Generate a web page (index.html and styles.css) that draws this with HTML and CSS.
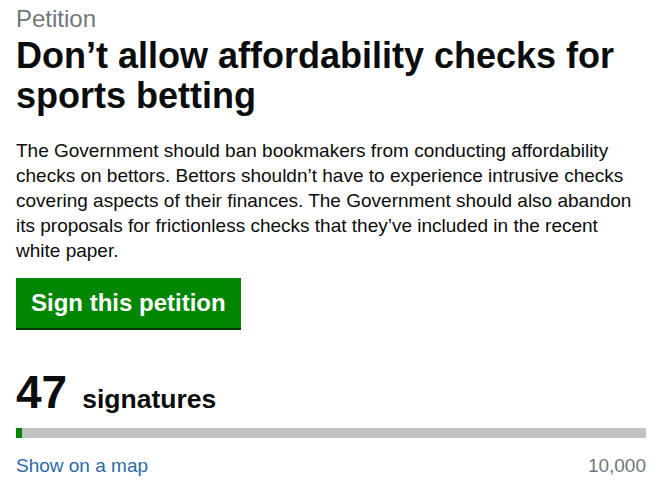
FILE: index.html
```html
<!DOCTYPE html>
<html lang="en">
<head>
<meta charset="utf-8">
<link rel="stylesheet" href="styles.css">
</head>
<body>
<main class="page">
  <div class="caption">Petition</div>
  <h1 class="title">Don’t allow affordability checks for sports betting</h1>
  <p class="lede">The Government should ban bookmakers from conducting affordability checks on bettors. Bettors shouldn’t have to experience intrusive checks covering aspects of their finances. The Government should also abandon its proposals for frictionless checks that they’ve included in the recent white paper.</p>
  <a class="button" href="#">Sign this petition</a>
  <div class="count"><span class="count-num">47</span><span class="count-label">signatures</span></div>
  <div class="bar"><div class="bar-fill" style="width:6px"></div></div>
  <div class="meta">
    <a class="map-link" href="#">Show on a map</a>
    <span class="target">10,000</span>
  </div>
</main>
</body>
</html>
```
FILE: styles.css
```css
* { box-sizing: border-box; }
body {
  margin: 0;
  font-family: "Liberation Sans", Arial, sans-serif;
  color: #0b0c0c;
  background: #fff;
}
.page {
  padding: 5px 13px 0 16px;
  display: flex;
  flex-direction: column;
  align-items: flex-start;
}
.caption {
  font-size: 24px;
  line-height: 28px;
  color: #6f777b;
}
.title {
  margin: 3px 0 0;
  font-size: 36px;
  line-height: 40px;
  font-weight: 700;
}
.lede {
  margin: 22px 0 0;
  font-size: 19px;
  line-height: 25px;
}
.button {
  margin-top: 15px;
  display: inline-block;
  background: #008600;
  color: #fff;
  font-weight: 700;
  font-size: 24px;
  line-height: 28px;
  padding: 11px 15px 11px 15px;
  text-decoration: none;
  box-shadow: 0 2px 0 #003a00;
}
.count {
  margin-top: 36px;
  display: flex;
  align-items: baseline;
  gap: 15px;
  font-weight: 700;
}
.count-num { font-size: 46px; line-height: 56px; }
.count-label { font-size: 26.5px; line-height: 30px; }
.bar {
  margin-top: 8px;
  width: 100%;
  height: 10px;
  background: #bfc1c3;
}
.bar-fill { height: 100%; background: #008600; }
.meta {
  margin-top: 15px;
  width: 100%;
  display: flex;
  justify-content: space-between;
  font-size: 19px;
  line-height: 25px;
}
.map-link { color: #2b6ba6; text-decoration: none; }
.target { color: #6f777b; }
```
